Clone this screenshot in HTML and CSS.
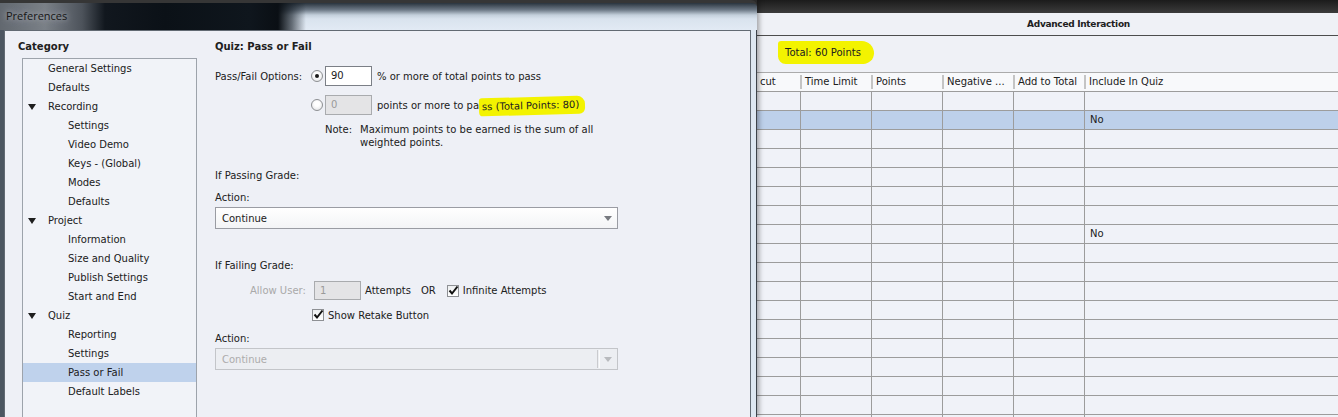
FILE: index.html
```html
<!DOCTYPE html>
<html lang="en">
<head>
    <meta charset="UTF-8">
    <meta name="viewport" content="width=device-width, initial-scale=1.0">
    <title>Preferences</title>
    <link rel="stylesheet" href="styles.css">
</head>
<body>
<div class="screen">
    <div class="dialog">
        <div class="titlebar"><span class="title">Preferences</span></div>
        <div class="frame">
            <div class="client">
                <div class="category">
                    <div class="heading">Category</div>
                    <ul class="tree">
                        <li>General Settings</li>
                        <li>Defaults</li>
                        <li class="parent"><span class="caret"></span>Recording</li>
                        <li class="sub">Settings</li>
                        <li class="sub">Video Demo</li>
                        <li class="sub">Keys - (Global)</li>
                        <li class="sub">Modes</li>
                        <li class="sub">Defaults</li>
                        <li class="parent"><span class="caret"></span>Project</li>
                        <li class="sub">Information</li>
                        <li class="sub">Size and Quality</li>
                        <li class="sub">Publish Settings</li>
                        <li class="sub">Start and End</li>
                        <li class="parent"><span class="caret"></span>Quiz</li>
                        <li class="sub">Reporting</li>
                        <li class="sub">Settings</li>
                        <li class="sub selected">Pass or Fail</li>
                        <li class="sub">Default Labels</li>
                    </ul>
                </div>

                <div class="page">
                    <h2>Quiz: Pass or Fail</h2>

                    <div class="opt-row first">
                        <span class="opt-label">Pass/Fail Options:</span>
                        <span class="radio checked"></span>
                        <span class="field">90</span>
                        <span class="after">% or more of total points to pass</span>
                    </div>
                    <div class="opt-row second">
                        <span class="radio"></span>
                        <span class="field disabled">0</span>
                        <span class="after">points or more to pa<span class="marker inline">ss (Total Points: 80)</span></span>
                    </div>
                    <div class="note">
                        <span class="note-label">Note:</span>
                        <span>Maximum points to be earned is the sum of all<br>weighted points.</span>
                    </div>

                    <div class="section-label passing">If Passing Grade:</div>
                    <div class="action-label">Action:</div>
                    <div class="dropdown">
                        <span>Continue</span>
                        <span class="arrow"></span>
                    </div>

                    <div class="section-label failing">If Failing Grade:</div>
                    <div class="fail-row">
                        <span class="muted">Allow User:</span>
                        <span class="field disabled small">1</span>
                        <span class="attempts">Attempts</span>
                        <span class="or">OR</span>
                        <span class="check">
                            <svg width="12" height="12" viewBox="0 0 12 12"><path d="M2.5 5.5 L5 8.5 L10.5 1.5" fill="none" stroke="#111" stroke-width="2"/></svg>
                        </span>
                        <span class="check-text">Infinite Attempts</span>
                    </div>
                    <div class="retake-row">
                        <span class="check">
                            <svg width="12" height="12" viewBox="0 0 12 12"><path d="M2.5 5.5 L5 8.5 L10.5 1.5" fill="none" stroke="#111" stroke-width="2"/></svg>
                        </span>
                        <span class="check-text">Show Retake Button</span>
                    </div>
                    <div class="action-label second">Action:</div>
                    <div class="dropdown disabled">
                        <span>Continue</span>
                        <span class="split"></span>
                        <span class="arrow"></span>
                    </div>
                </div>
            </div>
        </div>
    </div>

    <div class="app">
        <div class="app-top"></div>
        <div class="app-title">Advanced Interaction</div>
        <div class="app-total"><span class="marker">Total: 60 Points</span></div>
        <div class="grid-head">
            <span>cut</span>
            <span>Time Limit</span>
            <span>Points</span>
            <span>Negative ...</span>
            <span>Add to Total</span>
            <span>Include In Quiz</span>
        </div>
        <div class="grid-row"><span></span><span></span><span></span><span></span><span></span><span></span></div>
        <div class="grid-row selected"><span></span><span></span><span></span><span></span><span></span><span>No</span></div>
        <div class="grid-row"><span></span><span></span><span></span><span></span><span></span><span></span></div>
        <div class="grid-row"><span></span><span></span><span></span><span></span><span></span><span></span></div>
        <div class="grid-row"><span></span><span></span><span></span><span></span><span></span><span></span></div>
        <div class="grid-row"><span></span><span></span><span></span><span></span><span></span><span></span></div>
        <div class="grid-row"><span></span><span></span><span></span><span></span><span></span><span></span></div>
        <div class="grid-row"><span></span><span></span><span></span><span></span><span></span><span>No</span></div>
        <div class="grid-row"><span></span><span></span><span></span><span></span><span></span><span></span></div>
        <div class="grid-row"><span></span><span></span><span></span><span></span><span></span><span></span></div>
        <div class="grid-row"><span></span><span></span><span></span><span></span><span></span><span></span></div>
        <div class="grid-row"><span></span><span></span><span></span><span></span><span></span><span></span></div>
        <div class="grid-row"><span></span><span></span><span></span><span></span><span></span><span></span></div>
        <div class="grid-row"><span></span><span></span><span></span><span></span><span></span><span></span></div>
        <div class="grid-row"><span></span><span></span><span></span><span></span><span></span><span></span></div>
        <div class="grid-row"><span></span><span></span><span></span><span></span><span></span><span></span></div>
        <div class="grid-row"><span></span><span></span><span></span><span></span><span></span><span></span></div>
        <div class="grid-row"><span></span><span></span><span></span><span></span><span></span><span></span></div>
    </div>
</div>
</body>
</html>
```

FILE: styles.css
```css
body {
    margin: 0;
    font-family: "DejaVu Sans", sans-serif;
    font-size: 10px;
    color: #202020;
    background: #2a2a2a;
}

.screen {
    display: flex;
    width: 1338px;
    height: 417px;
    overflow: hidden;
}

/* Preferences dialog */
.dialog {
    width: 757px;
    flex: none;
    display: flex;
    flex-direction: column;
    position: relative;
    z-index: 1;
    box-shadow: 2px 0 5px rgba(0, 0, 0, 0.35);
}

.titlebar {
    height: 27px;
    border-top: 3px solid #363636;
    border-top-right-radius: 6px;
    padding-left: 6px;
    line-height: 25px;
    background:
        linear-gradient(to right, #62686f 0, #7a8087 45px, #4d535b 82px, #11171e 105px, #0b1117 165px, #0f161d 250px, #0a0f14 278px, rgba(20, 28, 36, 0.6) 292px, rgba(0, 0, 0, 0) 306px),
        linear-gradient(#2a343e 0, #6f7b88 7px, #c3cfdb 12px, #d9e3ee 16px, #e2eaf4 27px);
}

.title {
    font-family: "Open Sans", sans-serif;
    font-size: 11px;
    color: #161616;
    text-shadow: 0 0 5px #a4aab0, 0 0 9px #a4aab0;
}

.frame {
    flex: 1;
    display: flex;
    padding: 0 5px 0 4px;
    background: linear-gradient(to right, #4c5661 4px, #dde7f1 4px);
    border-right: 1px solid #3d434a;
}

.client {
    flex: 1;
    display: flex;
    background: #eef0f6;
    border: 1px solid #626a73;
    border-bottom: none;
}

/* category tree */
.category {
    width: 192px;
    flex: none;
    box-sizing: border-box;
    padding-left: 17px;
    display: flex;
    flex-direction: column;
}

.heading {
    padding-top: 9px;
    margin-left: -4px;
    line-height: 14px;
    font-weight: bold;
}

.tree {
    flex: 1;
    list-style: none;
    margin: 4px 0 0;
    padding: 0;
    border: 1px solid #9da3ab;
    border-bottom: none;
    background: #f1f3f8;
}

.tree li {
    height: 19px;
    line-height: 19px;
    padding-left: 25px;
    white-space: nowrap;
}

.tree li.parent {
    padding-left: 5px;
}

.tree li.sub {
    padding-left: 45px;
}

.tree li.selected {
    background: #bfd2ec;
}

.caret {
    display: inline-block;
    width: 0;
    height: 0;
    border-left: 4px solid transparent;
    border-right: 4px solid transparent;
    border-top: 6px solid #1e1e1e;
    margin-right: 12px;
    vertical-align: 0;
}

/* settings page */
.page {
    flex: 1;
    padding: 9px 0 0 18px;
}

.page h2 {
    margin: 0;
    font-size: 10px;
    line-height: 14px;
    font-weight: bold;
}

.opt-row {
    display: flex;
    align-items: center;
    height: 20px;
    white-space: nowrap;
}

.opt-row.first {
    margin-top: 12px;
}

.opt-row.second {
    margin-top: 9px;
    padding-left: 96px;
}

.opt-label {
    width: 96px;
    flex: none;
}

.radio {
    width: 12px;
    height: 12px;
    box-sizing: border-box;
    flex: none;
    border: 1px solid #8d8f92;
    border-radius: 50%;
    background: radial-gradient(circle at 50% 40%, #ffffff 30%, #dcdde0 100%);
    margin-right: 2px;
    display: flex;
    align-items: center;
    justify-content: center;
}

.radio.checked::after {
    content: "";
    width: 4px;
    height: 4px;
    border-radius: 50%;
    background: #1a1a1a;
}

.field {
    width: 47px;
    height: 20px;
    box-sizing: border-box;
    flex: none;
    border: 1px solid #7b7f86;
    background: #fff;
    padding-left: 5px;
    line-height: 18px;
}

.field.disabled {
    background: #e4e4e6;
    border-color: #a9abae;
    color: #9a9a9a;
}

.field.small {
    height: 19px;
    line-height: 17px;
}

.after {
    margin-left: 5px;
}

.marker {
    background: #f3f300;
    display: inline-block;
}

.marker.inline {
    padding: 3px 6px 4px 3px;
    margin: -3px 0 -4px;
    border-radius: 3px 8px 6px 4px;
    transform: rotate(-1.5deg);
}

.note {
    display: flex;
    margin-top: 8px;
    padding-left: 110px;
    line-height: 13px;
    white-space: nowrap;
}

.note-label {
    width: 35px;
    flex: none;
}

.section-label,
.action-label {
    line-height: 13px;
}

.section-label.passing {
    margin-top: 20px;
}

.action-label {
    margin-top: 9px;
}

.dropdown {
    display: flex;
    align-items: center;
    width: 403px;
    height: 22px;
    box-sizing: border-box;
    margin-top: 3px;
    padding-left: 6px;
    border: 1px solid #9a9ca3;
    background: linear-gradient(#ffffff, #f3f4f6);
}

.dropdown .arrow {
    margin-left: auto;
    margin-right: 5px;
    width: 0;
    height: 0;
    border-left: 4px solid transparent;
    border-right: 4px solid transparent;
    border-top: 5px solid #777a80;
}

.dropdown.disabled {
    color: #acacac;
    border-color: #c3c5c9;
    background: #eceef2;
}

.dropdown .split {
    margin-left: auto;
    height: 18px;
    width: 1px;
    border-left: 1px solid #cacbce;
    border-right: 1px solid #fbfbfb;
}

.dropdown.disabled .arrow {
    margin-left: 4px;
    border-top-color: #b8babe;
}

.section-label.failing {
    margin-top: 30px;
}

.fail-row {
    display: flex;
    align-items: center;
    height: 19px;
    margin-top: 9px;
    padding-left: 35px;
    white-space: nowrap;
}

.muted {
    color: #a9a9a9;
    width: 58px;
    margin-right: 6px;
}

.attempts {
    margin-left: 4px;
}

.or {
    margin-left: 10px;
    margin-right: 11px;
}

.check {
    width: 12px;
    height: 12px;
    box-sizing: border-box;
    flex: none;
    border: 1px solid #8e9094;
    background: linear-gradient(#eceef0, #ffffff);
    display: flex;
    align-items: center;
    justify-content: center;
}

.check svg {
    flex: none;
}

.check-text {
    margin-left: 4px;
}

.retake-row {
    display: flex;
    align-items: center;
    height: 14px;
    margin-top: 8px;
    padding-left: 97px;
}

.action-label.second {
    margin-top: 10px;
}

/* background application */
.app {
    flex: 1;
    display: flex;
    flex-direction: column;
    background: #f0f2f8;
}

.app-top {
    height: 13px;
    flex: none;
    background: linear-gradient(#1b1b1b, #3c3c3c);
}

.app-title {
    height: 22px;
    flex: none;
    line-height: 22px;
    text-align: center;
    padding-left: 62px;
    font-size: 9px;
    letter-spacing: -0.3px;
    font-weight: bold;
    background: #eff1f6;
    border-bottom: 1px solid #4d4d4d;
}

.app-total {
    height: 31px;
    flex: none;
    padding: 5px 0 0 21px;
    background: #eff1f6;
    border-bottom: 1px solid #ababab;
}

.app-total .marker {
    line-height: 13px;
    padding: 5px 13px 5px 7px;
    border-radius: 4px 16px 14px 10px;
}

.grid-head,
.grid-row {
    display: grid;
    grid-template-columns: 43px 71px 71px 71px 71px 1fr;
    flex: none;
    white-space: nowrap;
}

.grid-head {
    height: 18px;
    background: #f8f9fb;
    border-bottom: 1px solid #9c9c9c;
}

.grid-head span {
    margin-top: 2px;
    height: 14px;
    line-height: 14px;
    padding-left: 3px;
    border-left: 2px solid #c4c4c4;
    overflow: hidden;
}

.grid-head span:first-child {
    border-left: none;
}

.grid-row {
    height: 18px;
    border-bottom: 1px solid #9c9c9c;
}

.grid-row span {
    line-height: 18px;
    padding-left: 5px;
    border-left: 1px solid #9c9c9c;
}

.grid-row span:first-child {
    border-left: none;
}

.grid-row.selected {
    background: #bdd0ea;
}
```
